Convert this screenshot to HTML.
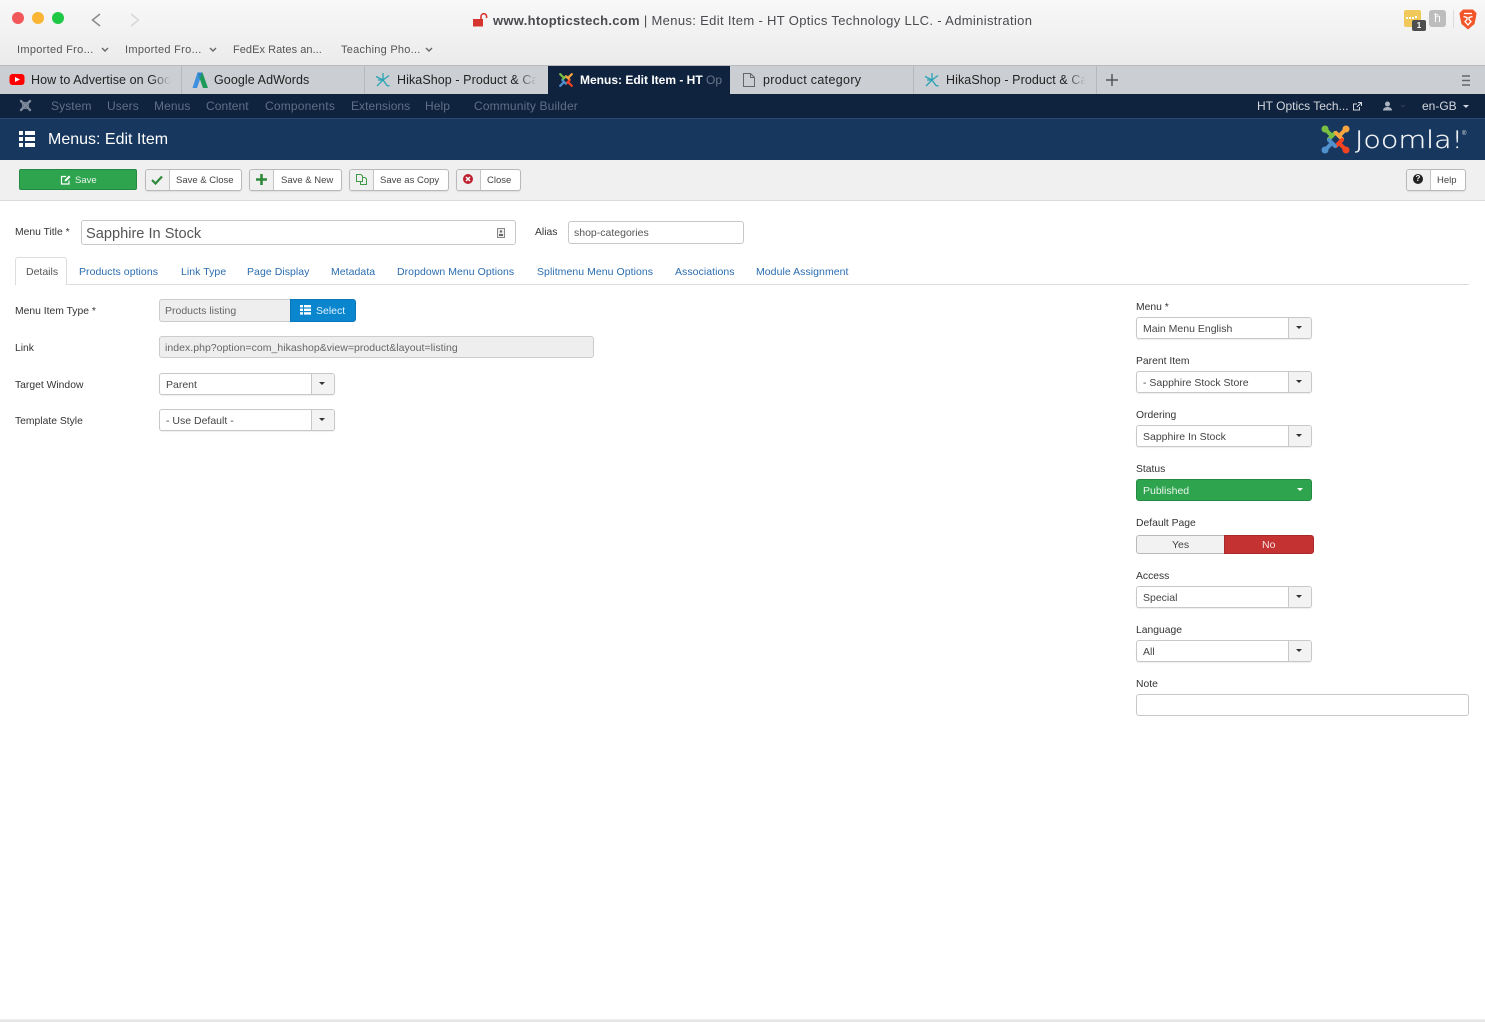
<!DOCTYPE html>
<html lang="en"><head><meta charset="utf-8"><title>Menus: Edit Item</title>
<style>
html,body{margin:0;padding:0;width:1485px;height:1022px;overflow:hidden;background:#fff}
body{position:relative;font-family:"Liberation Sans",Arial,sans-serif;font-size:11px;color:#333}
.a,.t{position:absolute;box-sizing:border-box}
.t{white-space:nowrap;line-height:20px;height:20px;margin-top:1px}
svg{position:absolute;overflow:visible}
.bm{font-size:11px;color:#555;letter-spacing:.3px}
.tab{font-size:12.5px;color:#222;letter-spacing:.08px;overflow:hidden;margin-top:0}
.tab i{position:absolute;right:0;top:0;width:22px;height:20px;background:linear-gradient(90deg,rgba(203,206,211,0),#cbced3 90%)}
.nav{font-size:12px;color:#5f6f85;letter-spacing:.1px;margin-top:0}
.btn{background:#fff;border:1px solid #b9b9b9;border-radius:3px;height:22px;box-shadow:0 1px 1px rgba(0,0,0,.08)}
.btn b{position:absolute;left:0;top:0;bottom:0;background:#f0f0f0;border-right:1px solid #c4c4c4;border-radius:2px 0 0 2px}
.lb{color:#333;font-size:10.35px;margin-top:2px}
.tb{color:#444;font-size:9.5px;margin-top:2px}
.lnk{color:#2a6db0;font-size:10.5px;letter-spacing:.05px}
.sel{background:#fff;border:1px solid #c8c8c8;border-radius:3px;height:22px;width:176px;box-shadow:0 1px 1px rgba(0,0,0,.07)}
.sel b{position:absolute;right:0;top:0;bottom:0;width:22px;background:#f3f3f3;border-left:1px solid #c8c8c8;border-radius:0 2px 2px 0}
.sel b:after{content:"";position:absolute;left:7px;top:8px;border:3px solid transparent;border-top:3px solid #333;border-bottom:0}
.sv{font-size:10.5px;color:#444}
</style></head><body>

<!-- browser chrome -->
<div class="a" style="left:0;top:0;width:1485px;height:66px;background:linear-gradient(#f8f8f8,#ebebeb);border-bottom:1px solid #b8babd"></div>
<div class="a" style="left:12px;top:12px;width:12px;height:12px;border-radius:50%;background:#f2575a"></div>
<div class="a" style="left:32px;top:12px;width:12px;height:12px;border-radius:50%;background:#fbb534"></div>
<div class="a" style="left:52px;top:12px;width:12px;height:12px;border-radius:50%;background:#1fc844"></div>
<svg style="left:0;top:0" width="150" height="40"><path d="M100 14 L92.500 20 L100 26" fill="none" stroke="#8a8a8a" stroke-width="1.500"/><path d="M131 14 L138.500 20 L131 26" fill="none" stroke="#d8d8d8" stroke-width="1.500"/></svg>

<svg style="left:473px;top:13px" width="16" height="14"><rect x="0" y="6" width="10" height="7.500" fill="#d6352f"/><path d="M8 6V3.500a2.800 2.800 0 0 1 5.600 0V5" fill="none" stroke="#d6352f" stroke-width="1.600"/></svg>
<div class="t" style="left:493px;top:10px;font-size:13px;color:#4a4a50;letter-spacing:.34px"><span style="font-weight:bold;letter-spacing:.29px">www.htopticstech.com</span> | Menus: Edit Item - HT Optics Technology LLC. - Administration</div>

<!-- extension icons -->
<div class="a" style="left:1404px;top:10px;width:17px;height:17px;border-radius:2px;background:#f0c95a"></div>
<div class="a" style="left:1406px;top:17px;width:2px;height:2px;background:#fff;box-shadow:3px 0 #fff,6px 0 #fff,9px -1px #fff"></div>
<div class="a" style="left:1412px;top:20px;width:14px;height:11px;border-radius:2px;background:#4e4e4e;color:#fff;font-size:8px;font-weight:bold;line-height:11px;text-align:center">1</div>
<div class="a" style="left:1429px;top:10px;width:17px;height:17px;border-radius:3px;background:#bdbdbd;color:#fff;font-size:12px;line-height:17px;text-align:center">ћ</div>
<div class="a" style="left:1453px;top:10px;width:1px;height:18px;background:#dcdcdc"></div>
<svg style="left:1459px;top:9px" width="18" height="21" viewBox="0 0 18 21"><path d="M4 0.500H14L17.500 4 17 8 15.500 15 9 20.500 2.500 15 1 8 .5 4Z" fill="#f1562b"/><path d="M4.500 7.500L8 8.500V10.500L6 12.500 9 16 12 12.500 10 10.500V8.500L13.500 7.500M5 4.500H13" fill="none" stroke="#fff" stroke-width="1.300"/></svg>

<!-- bookmarks -->
<div class="t bm" style="left:17px;top:39px">Imported Fro...</div>
<div class="t bm" style="left:125px;top:39px">Imported Fro...</div>
<div class="t bm" style="left:233px;top:39px;letter-spacing:.05px">FedEx Rates an...</div>
<div class="t bm" style="left:341px;top:39px;letter-spacing:.25px">Teaching Pho...</div>
<svg style="left:0;top:45px" width="440" height="10"><g fill="none" stroke="#666" stroke-width="1.400"><path d="M102 3l3 3 3-3"/><path d="M210 3l3 3 3-3"/><path d="M426 3l3 3 3-3"/></g></svg>

<!-- tab strip -->
<div class="a" style="left:0;top:66px;width:1485px;height:28px;background:#cbced3"></div>
<div class="a" style="left:181px;top:66px;width:1px;height:28px;background:#b5b8bd"></div>
<div class="a" style="left:364px;top:66px;width:1px;height:28px;background:#b5b8bd"></div>
<div class="a" style="left:913px;top:66px;width:1px;height:28px;background:#b5b8bd"></div>
<div class="a" style="left:1096px;top:66px;width:1px;height:28px;background:#b5b8bd"></div>
<div class="a" style="left:548px;top:66px;width:182px;height:28px;background:#0f233f"></div>

<svg style="left:9px;top:73px" width="16" height="13"><rect x="0.500" y="1" width="15" height="11" rx="3" fill="#f00"/><path d="M6 4l5 2.500-5 2.500z" fill="#fff"/></svg>
<div class="t tab" style="left:31px;top:70px;width:142px">How to Advertise on Google<i></i></div>
<svg style="left:192px;top:72px" width="17" height="17"><path d="M5.500 0.500L0.500 16H5L8.500 6Z" fill="#3d8fe0"/><path d="M5.500 0.500H10.500L16 16H11Z" fill="#1d9a5a"/><path d="M5.500 0.500H10L8 6Z" fill="#2f7fd0"/></svg>
<div class="t tab" style="left:214px;top:70px">Google AdWords</div>

<svg style="left:376px;top:73px" width="14" height="14"><g fill="none" stroke="#2aa3b5" stroke-width="1.300"><path d="M7 0V8M0 3.500L7 7 13 2.500M1 13L7 7 11 12.500 13.500 13M2 7H6"/></g></svg>
<div class="t tab" style="left:397px;top:70px;width:142px">HikaShop - Product &amp; Cat<i></i></div>

<svg style="left:558px;top:72px" width="16" height="16" viewBox="0 0 29 29"><g fill="none" stroke-width="4" stroke-linecap="round"><path d="M4 4L10 10M8 14L14 8" stroke="#7ac143"/><path d="M25 4L19 10M15 8L21 14" stroke="#f9a541"/><path d="M25 25L19 19M21 15L15 21" stroke="#f44321"/><path d="M4 25L10 19M14 21L8 15" stroke="#5091cd"/></g></svg>
<div class="t tab" style="left:580px;top:70px;width:143px;color:#fff;font-weight:bold;letter-spacing:0;font-size:12px">Menus: Edit Item - HT <span style="font-weight:normal;color:#68758a">Op</span></div>

<svg style="left:743px;top:73px" width="12" height="14"><path d="M.5.500H7.500L11.500 4.500V13.500H.5ZM7.500.500V4.500H11.500" fill="none" stroke="#666" stroke-width="1"/></svg>
<div class="t tab" style="left:763px;top:70px;letter-spacing:.33px">product category</div>

<svg style="left:925px;top:73px" width="14" height="14"><g fill="none" stroke="#2aa3b5" stroke-width="1.300"><path d="M7 0V8M0 3.500L7 7 13 2.500M1 13L7 7 11 12.500 13.500 13M2 7H6"/></g></svg>
<div class="t tab" style="left:946px;top:70px;width:142px">HikaShop - Product &amp; Cat<i></i></div>
<svg style="left:1106px;top:74px" width="12" height="12"><path d="M6 0V12M0 6H12" stroke="#555" stroke-width="1.500"/></svg>
<svg style="left:1462px;top:75px" width="8" height="11"><path d="M0 1H8M0 5.500H8M0 10H8" stroke="#666" stroke-width="1.400"/></svg>

<!-- joomla nav -->
<div class="a" style="left:0;top:94px;width:1485px;height:25px;background:#0f233f;border-bottom:1px solid #2b4a72"></div>
<svg style="left:19px;top:99px" width="13" height="13"><g fill="none" stroke="#7d899a" stroke-width="2.400" stroke-linecap="round"><path d="M2 2L11 11M11 2L2 11"/></g><circle cx="6.500" cy="6.500" r="3" fill="none" stroke="#7d899a" stroke-width="1.200"/></svg>
<div class="t nav" style="left:51px;top:96px">System</div>
<div class="t nav" style="left:107px;top:96px">Users</div>
<div class="t nav" style="left:154px;top:96px">Menus</div>
<div class="t nav" style="left:206px;top:96px">Content</div>
<div class="t nav" style="left:265px;top:96px;letter-spacing:.2px">Components</div>
<div class="t nav" style="left:351px;top:96px;letter-spacing:.05px">Extensions</div>
<div class="t nav" style="left:425px;top:96px">Help</div>
<div class="t nav" style="left:474px;top:96px;letter-spacing:.15px">Community Builder</div>
<div class="t" style="left:1257px;top:96px;font-size:12px;color:#d3d7dd;margin-top:0">HT Optics Tech...</div>
<svg style="left:1353px;top:102px" width="9" height="9"><path d="M6.500 5V8H.5V2H4M5 .5H8.500V4M8.500 .5L4 5" fill="none" stroke="#d3d7dd" stroke-width="1"/></svg>
<svg style="left:1383px;top:101px" width="9" height="10"><circle cx="4.500" cy="3" r="2.500" fill="#aab2bd"/><path d="M0 9.500C0 6.500 3 6 4.500 6S9 6.500 9 9.500Z" fill="#aab2bd"/></svg>
<div class="a" style="left:1400px;top:105px;border:3px solid transparent;border-top-color:#24344d;border-bottom:0"></div>
<div class="t" style="left:1422px;top:96px;font-size:12px;color:#d3d7dd;margin-top:0">en-GB</div>
<div class="a" style="left:1463px;top:105px;border:3px solid transparent;border-top-color:#d3d7dd;border-bottom:0"></div>

<!-- header -->
<div class="a" style="left:0;top:119px;width:1485px;height:41px;background:#17375e"></div>
<svg style="left:19px;top:131px" width="16" height="16"><g fill="#fff"><rect x="0" y="0" width="4" height="4"/><rect x="6" y="0" width="10" height="4"/><rect x="0" y="6" width="4" height="4"/><rect x="6" y="6" width="10" height="4"/><rect x="0" y="12" width="4" height="4"/><rect x="6" y="12" width="10" height="4"/></g></svg>
<div class="t" style="left:48px;top:129px;font-size:16px;color:#fff">Menus: Edit Item</div>
<svg style="left:1321px;top:125px" width="29" height="29" viewBox="0 0 29 29"><g fill="none" stroke-width="4" stroke-linecap="round"><path d="M4 4L10 10M8 14L14 8" stroke="#7ac143"/><path d="M25 4L19 10M15 8L21 14" stroke="#f9a541"/><path d="M25 25L19 19M21 15L15 21" stroke="#f44321"/><path d="M4 25L10 19M14 21L8 15" stroke="#5091cd"/></g><circle cx="4" cy="4" r="3.500" fill="#7ac143"/><circle cx="25" cy="4" r="3.500" fill="#f9a541"/><circle cx="4" cy="25" r="3.500" fill="#5091cd"/><circle cx="25" cy="25" r="3.500" fill="#f44321"/></svg>
<svg style="left:1354px;top:125px" width="115" height="32"><text transform="translate(1 23) scale(1.190 1)" font-family="DejaVu Sans, sans-serif" font-weight="200" font-size="24" fill="#f4f6f8" stroke="#f4f6f8" stroke-width=".25">Joomla!</text><text x="108" y="10" font-family="Liberation Sans, sans-serif" font-size="6" fill="#dfe3e8">®</text></svg>

<!-- toolbar -->
<div class="a" style="left:0;top:160px;width:1485px;height:41px;background:#f0f0f0;border-bottom:1px solid #dcdcdc"></div>
<div class="a" style="left:19px;top:169px;width:118px;height:21px;background:#2fa44f;border:1px solid #258a41;border-radius:2px"></div>
<svg style="left:61px;top:175px" width="10" height="10"><path d="M8 5.500V9H.5V1.500H5" fill="none" stroke="#fff" stroke-width="1.200"/><path d="M3.500 6.500L4 4.500 8 .5 9.500 2 5.500 6Z" fill="#fff"/></svg>
<div class="t" style="left:75px;top:170px;font-size:9.500px;color:#e9f5ec">Save</div>

<div class="a btn" style="left:145px;top:169px;width:97px"><b style="width:23px"></b></div>
<svg style="left:151px;top:175px" width="12" height="10"><path d="M1 5L4.500 8.500 11 1.500" fill="none" stroke="#2f8a3a" stroke-width="2.200"/></svg>
<div class="t tb" style="left:176px;top:169px">Save &amp; Close</div>

<div class="a btn" style="left:249px;top:169px;width:93px"><b style="width:23px"></b></div>
<svg style="left:256px;top:174px" width="11" height="11"><path d="M5.500 0V11M0 5.500H11" stroke="#2f8a3a" stroke-width="2.600"/></svg>
<div class="t tb" style="left:281px;top:169px">Save &amp; New</div>

<div class="a btn" style="left:349px;top:169px;width:100px"><b style="width:23px"></b></div>
<svg style="left:356px;top:174px" width="11" height="11"><path d="M.5.5H5L6.500 2V7.500H.5ZM6.500 3.500H9L10.500 5V10.500H4.500V7.500" fill="none" stroke="#3f9a4a" stroke-width="1"/></svg>
<div class="t tb" style="left:380px;top:169px">Save as Copy</div>

<div class="a btn" style="left:456px;top:169px;width:65px"><b style="width:23px"></b></div>
<svg style="left:463px;top:174px" width="10" height="10"><circle cx="5" cy="5" r="5" fill="#bd2130"/><path d="M3 3L7 7M7 3L3 7" stroke="#fff" stroke-width="1.500"/></svg>
<div class="t tb" style="left:487px;top:169px">Close</div>

<div class="a btn" style="left:1406px;top:169px;width:60px"><b style="width:23px"></b></div>
<div class="a" style="left:1413px;top:174px;width:10px;height:10px;border-radius:50%;background:#222;color:#fff;font-size:8px;font-weight:bold;line-height:10px;text-align:center">?</div>
<div class="t tb" style="left:1437px;top:169px">Help</div>

<!-- title row -->
<div class="t lb" style="left:15px;top:221px">Menu Title *</div>
<div class="a" style="left:81px;top:220px;width:435px;height:25px;border:1px solid #c8c8c8;border-radius:3px;background:#fff"></div>
<div class="t" style="left:86px;top:223px;font-size:14.600px;color:#555">Sapphire In Stock</div>
<svg style="left:497px;top:228px" width="8" height="10"><rect x=".5" y=".5" width="7" height="9" fill="#eee" stroke="#888"/><circle cx="4" cy="3.500" r="1.200" fill="#666"/><rect x="2" y="6" width="4" height="2" fill="#666"/></svg>
<div class="t lb" style="left:535px;top:221px">Alias</div>
<div class="a" style="left:568px;top:221px;width:176px;height:23px;border:1px solid #c8c8c8;border-radius:3px;background:#fff"></div>
<div class="t sv" style="left:574px;top:222px;color:#555">shop-categories</div>

<!-- tabs -->
<div class="a" style="left:15px;top:284px;width:1454px;height:1px;background:#ddd"></div>
<div class="a" style="left:15px;top:257px;width:52px;height:28px;background:#fff;border:1px solid #ddd;border-bottom:0;border-radius:3px 3px 0 0"></div>
<div class="t sv" style="left:26px;top:261px;color:#555">Details</div>
<div class="t lnk" style="left:79px;top:261px">Products options</div>
<div class="t lnk" style="left:181px;top:261px">Link Type</div>
<div class="t lnk" style="left:247px;top:261px">Page Display</div>
<div class="t lnk" style="left:331px;top:261px">Metadata</div>
<div class="t lnk" style="left:397px;top:261px">Dropdown Menu Options</div>
<div class="t lnk" style="left:537px;top:261px">Splitmenu Menu Options</div>
<div class="t lnk" style="left:675px;top:261px">Associations</div>
<div class="t lnk" style="left:756px;top:261px">Module Assignment</div>

<!-- left column -->
<div class="t lb" style="left:15px;top:300px">Menu Item Type *</div>
<div class="a" style="left:159px;top:299px;width:132px;height:23px;background:#eee;border:1px solid #ccc;border-right:0;border-radius:3px 0 0 3px"></div>
<div class="t sv" style="left:165px;top:300px;color:#666">Products listing</div>
<div class="a" style="left:290px;top:299px;width:66px;height:23px;background:#0a86cf;border:1px solid #0876b8;border-radius:0 3px 3px 0"></div>
<svg style="left:300px;top:305px" width="11" height="10"><g fill="#fff"><rect width="3" height="2.400"/><rect x="4" width="7" height="2.400"/><rect y="3.600" width="3" height="2.400"/><rect x="4" y="3.600" width="7" height="2.400"/><rect y="7.200" width="3" height="2.400"/><rect x="4" y="7.200" width="7" height="2.400"/></g></svg>
<div class="t" style="left:316px;top:300px;font-size:10.500px;color:#e4f2fb">Select</div>

<div class="t lb" style="left:15px;top:337px">Link</div>
<div class="a" style="left:159px;top:336px;width:435px;height:22px;background:#eee;border:1px solid #ccc;border-radius:3px"></div>
<div class="t sv" style="left:165px;top:337px;color:#666;letter-spacing:.03px">index.php?option=com_hikashop&amp;view=product&amp;layout=listing</div>

<div class="t lb" style="left:15px;top:374px">Target Window</div>
<div class="a sel" style="left:159px;top:373px"><b></b></div>
<div class="t sv" style="left:166px;top:374px">Parent</div>

<div class="t lb" style="left:15px;top:410px">Template Style</div>
<div class="a sel" style="left:159px;top:409px"><b></b></div>
<div class="t sv" style="left:166px;top:410px">- Use Default -</div>

<!-- right column -->
<div class="t lb" style="left:1136px;top:296px">Menu *</div>
<div class="a sel" style="left:1136px;top:317px"><b></b></div>
<div class="t sv" style="left:1143px;top:318px">Main Menu English</div>

<div class="t lb" style="left:1136px;top:350px">Parent Item</div>
<div class="a sel" style="left:1136px;top:371px"><b></b></div>
<div class="t sv" style="left:1143px;top:372px">- Sapphire Stock Store</div>

<div class="t lb" style="left:1136px;top:404px">Ordering</div>
<div class="a sel" style="left:1136px;top:425px"><b></b></div>
<div class="t sv" style="left:1143px;top:426px">Sapphire In Stock</div>

<div class="t lb" style="left:1136px;top:458px">Status</div>
<div class="a" style="left:1136px;top:479px;width:176px;height:22px;background:#2fa44f;border:1px solid #258a41;border-radius:3px"></div>
<div class="t sv" style="left:1143px;top:480px;color:#e9f5ec">Published</div>
<div class="a" style="left:1297px;top:488px;border:3px solid transparent;border-top-color:#fff;border-bottom:0"></div>

<div class="t lb" style="left:1136px;top:512px">Default Page</div>
<div class="a" style="left:1136px;top:535px;width:89px;height:19px;background:#f2f2f2;border:1px solid #b9b9b9;border-radius:3px 0 0 3px"></div>
<div class="t sv" style="left:1172px;top:534px">Yes</div>
<div class="a" style="left:1224px;top:535px;width:90px;height:19px;background:#c43232;border:1px solid #a92a2a;border-radius:0 3px 3px 0"></div>
<div class="t sv" style="left:1262px;top:534px;color:#f7e4e4">No</div>

<div class="t lb" style="left:1136px;top:565px">Access</div>
<div class="a sel" style="left:1136px;top:586px"><b></b></div>
<div class="t sv" style="left:1143px;top:587px">Special</div>

<div class="t lb" style="left:1136px;top:619px">Language</div>
<div class="a sel" style="left:1136px;top:640px"><b></b></div>
<div class="t sv" style="left:1143px;top:641px">All</div>

<div class="t lb" style="left:1136px;top:673px">Note</div>
<div class="a" style="left:1136px;top:694px;width:333px;height:22px;background:#fff;border:1px solid #c8c8c8;border-radius:3px"></div>

<!-- bottom edge -->
<div class="a" style="left:0;top:1019px;width:1485px;height:3px;background:linear-gradient(#efefef,#e2e2e2)"></div>
</body></html>
